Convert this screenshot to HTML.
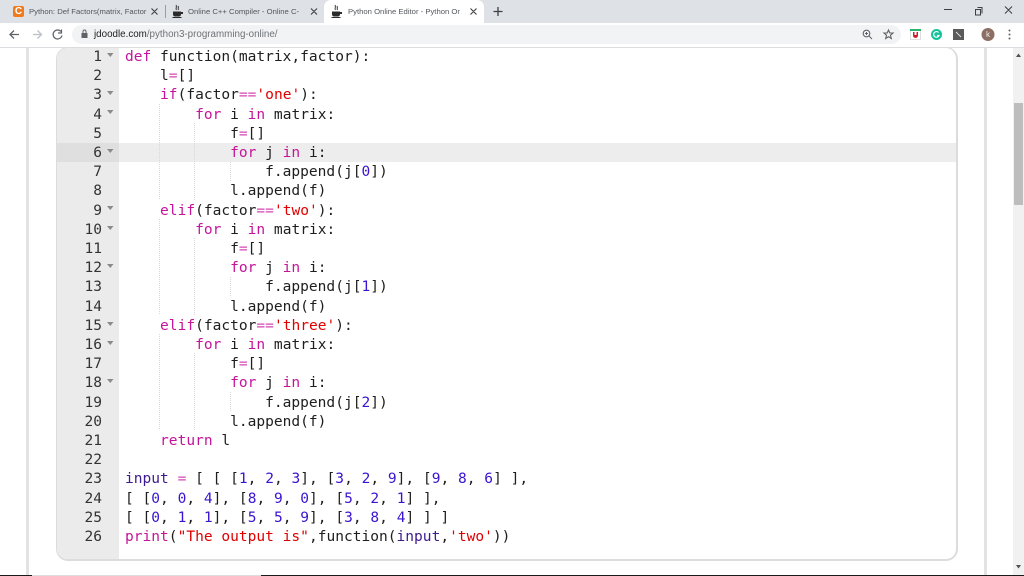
<!DOCTYPE html>
<html><head><meta charset="utf-8"><style>
html,body{margin:0;padding:0;width:1024px;height:576px;overflow:hidden;background:#fff;font-family:"Liberation Sans",sans-serif}
.a{position:absolute}
.tt{position:absolute;top:6px;font-size:7.7px;line-height:11px;white-space:nowrap;overflow:hidden;color:#55585c}
pre{position:absolute;margin:0;font-family:"DejaVu Sans Mono",monospace;font-size:14.55px;line-height:19.2px;color:#1e1e1e}
.k{color:#c5149a}.o{color:#d548b5}.s{color:#e00000}.n{color:#3b14d0}.v{color:#3d1a8e}.b{color:#7a4a10}
</style></head><body>
<!-- tab strip -->
<div class="a" style="left:0;top:0;width:1024px;height:23px;background:#dee1e6"></div>
<div class="a" style="left:324px;top:0;width:160px;height:23px;background:#fff;border-radius:7px 7px 0 0"></div>
<div class="a" style="left:13px;top:6px;width:11px;height:11px;background:#f07b1c;border-radius:2px;color:#fff;font:bold 10px/11px 'Liberation Sans';text-align:center">C</div>
<div class="tt" style="left:29px;width:118px">Python: Def Factors(matrix, Factor</div>
<div class="a" style="left:165px;top:5px;width:1px;height:13px;background:#9a9da1"></div>
<div class="tt" style="left:188px;width:116px">Online C++ Compiler - Online C-</div>
<div class="tt" style="left:348px;width:117px">Python Online Editor - Python Or</div>
<svg class="a" style="left:0;top:0" width="1024" height="48" fill="none">
<g stroke="#3c4043" stroke-width="1.1"><path d="M151.500 8.500l6 6M157.500 8.500l-6 6M311 8.500l6 6M317 8.500l-6 6M470.500 8.500l6 6M476.500 8.500l-6 6"/><path d="M498 7v9M493.500 11.500h9" stroke-width="1.300"/></g>
<g stroke="#333" stroke-width="1"><path d="M176 5c1.500 2-1 3 .5 5M178 6c1 1.500-.5 2.500.5 4"/><path d="M335 5c1.500 2-1 3 .5 5M337 6c1 1.500-.5 2.500.5 4"/></g>
<g fill="#2b2b2b"><path d="M173 11.500h8v3c0 1-1 2-2 2h-4c-1 0-2-1-2-2zM181 12h2v2h-2zM172.500 17h9v1h-9z"/><path d="M332 11.500h8v3c0 1-1 2-2 2h-4c-1 0-2-1-2-2zM340 12h2v2h-2zM331.500 17h9v1h-9z"/></g>
<g stroke="#3c4043" stroke-width="1"><path d="M944 9.500h8M977.500 7.500h4.500v6M975.500 9.500h5v5.500h-5zM1005 6.500l7 7M1012 6.500l-7 7" fill="none"/></g>
<!-- toolbar -->
<rect x="0" y="23" width="1024" height="24" fill="#fff"/>
<rect x="72" y="25" width="829" height="19" rx="9.500" fill="#f1f3f4"/>
<rect x="0" y="47" width="1024" height="1" fill="#dadce0"/>
<path d="M19 34.500h-8.500M14 30.500l-4 4 4 4" stroke="#5f6368" stroke-width="1.300"/>
<path d="M41 34.500h-8M37.500 30.500l4 4-4 4" stroke="#bcbfc3" stroke-width="1.300"/>
<path d="M61 31.500a4.500 4.500 0 1 0 1 4M61.500 29.500v3.500h-3.500" stroke="#5f6368" stroke-width="1.200"/>
<rect x="81.500" y="33" width="6" height="5" fill="#5f6368"/><path d="M83 33v-1.500a1.500 1.500 0 0 1 3 0V33" stroke="#5f6368"/>
<circle cx="866.500" cy="33.500" r="3.300" stroke="#5f6368" stroke-width="1.100"/><path d="M869 36l3 3M865 33.500h3M866.500 32v3" stroke="#5f6368"/>
<path d="M888.500 30l1.300 3h3.200l-2.500 2.200.8 3.300-2.800-1.800-2.800 1.800.8-3.300-2.500-2.200h3.200z" stroke="#5f6368" stroke-width="1.100"/>
<rect x="910.500" y="29.500" width="10" height="10" fill="#fff" stroke="#ddd"/><rect x="910" y="29" width="11" height="2" fill="#2cb56a"/><path d="M913 32h5v3.500a2.500 2.500 0 0 1-5 0z" fill="#d01c2c"/><rect x="914.500" y="32" width="2" height="3" fill="#fff"/>
<circle cx="936.500" cy="34.500" r="5.500" fill="#15c39a"/><path d="M938.500 32.500a2.800 2.800 0 1 0 .5 3h-2" stroke="#fff" stroke-width="1.200"/>
<rect x="953" y="29" width="11" height="11" fill="#5a5a5a"/><path d="M956 32l5 5" stroke="#ddd"/>
<circle cx="988" cy="34.500" r="6.500" fill="#8d6e63"/>
<circle cx="1009.500" cy="30.500" r="1" fill="#5f6368"/><circle cx="1009.500" cy="34.500" r="1" fill="#5f6368"/><circle cx="1009.500" cy="38.500" r="1" fill="#5f6368"/>
</svg>
<div class="a" style="left:984px;top:29px;width:8px;text-align:center;color:#eee;font-size:8px;line-height:11px">k</div>
<div class="a" style="left:94px;top:28px;font-size:9.8px;line-height:13px;color:#6f7377;white-space:nowrap"><span style="color:#202124">jdoodle.com</span>/python3-programming-online/</div>
<!-- page frame -->
<div class="a" style="left:26px;top:48px;width:3px;height:528px;background:#e3e3e3"></div>
<div class="a" style="left:984px;top:48px;width:3px;height:528px;background:#e3e3e3"></div>
<!-- scrollbar -->
<div class="a" style="left:1013px;top:48px;width:11px;height:528px;background:#f1f1f1"></div>
<div class="a" style="left:1014px;top:103px;width:9px;height:102px;background:#bdbdbd"></div>
<svg class="a" style="left:1013px;top:48px" width="11" height="528"><path d="M3 9h5L5.500 5.500zM3 517h5L5.500 520.500z" fill="#505050"/></svg>
<!-- editor -->
<div class="a" style="left:56px;top:47px;width:899px;height:511px;border:1px solid #dcdcdc;border-width:1px 2px 2px 1px;border-radius:12px;overflow:hidden;background:#fff">
 <div class="a" style="left:0;top:0;width:62px;height:511px;background:#ebebeb"></div>
 <div class="a" style="left:0;top:95px;width:899px;height:19px;background:#ededed"></div>
 <div class="a" style="left:0;top:95px;width:62px;height:19px;background:#dfdfdf"></div>
</div>
<!-- indent guides -->
<svg class="a" style="left:0;top:0" width="1024" height="576"><g stroke="#d8d8d8" stroke-dasharray="1 1">
<path d="M159.500 104v96M194.500 123v77M230.500 162v19M159.500 219v96M194.500 238v77M230.500 277v19M159.500 334v96M194.500 353v77M230.500 392v19"/>
</g>
<g fill="#8a8a8a"><path d="M107 53h6.500l-3.200 4zM107 91h6.500l-3.200 4zM107 110h6.500l-3.200 4zM107 149h6.500l-3.200 4zM107 206h6.500l-3.200 4zM107 226h6.500l-3.200 4zM107 264h6.500l-3.200 4zM107 322h6.500l-3.200 4zM107 341h6.500l-3.200 4zM107 379h6.500l-3.200 4z"/></g></svg>
<pre style="left:62px;top:47px;width:40px;text-align:right;color:#333">1
2
3
4
5
6
7
8
9
10
11
12
13
14
15
16
17
18
19
20
21
22
23
24
25
26</pre>
<pre style="left:125px;top:47px"><span class="k">def</span> function(matrix,factor):
    l<span class="o">=</span>[]
    <span class="k">if</span>(factor<span class="o">==</span><span class="s">'one'</span>):
        <span class="k">for</span> i <span class="k">in</span> matrix:
            f<span class="o">=</span>[]
            <span class="k">for</span> j <span class="k">in</span> i:
                f.append(j[<span class="n">0</span>])
            l.append(f)
    <span class="k">elif</span>(factor<span class="o">==</span><span class="s">'two'</span>):
        <span class="k">for</span> i <span class="k">in</span> matrix:
            f<span class="o">=</span>[]
            <span class="k">for</span> j <span class="k">in</span> i:
                f.append(j[<span class="n">1</span>])
            l.append(f)
    <span class="k">elif</span>(factor<span class="o">==</span><span class="s">'three'</span>):
        <span class="k">for</span> i <span class="k">in</span> matrix:
            f<span class="o">=</span>[]
            <span class="k">for</span> j <span class="k">in</span> i:
                f.append(j[<span class="n">2</span>])
            l.append(f)
    <span class="k">return</span> l

<span class="v">input</span> <span class="o">=</span> [ [ [<span class="n">1</span>, <span class="n">2</span>, <span class="n">3</span>], [<span class="n">3</span>, <span class="n">2</span>, <span class="n">9</span>], [<span class="n">9</span>, <span class="n">8</span>, <span class="n">6</span>] ],
[ [<span class="n">0</span>, <span class="n">0</span>, <span class="n">4</span>], [<span class="n">8</span>, <span class="n">9</span>, <span class="n">0</span>], [<span class="n">5</span>, <span class="n">2</span>, <span class="n">1</span>] ],
[ [<span class="n">0</span>, <span class="n">1</span>, <span class="n">1</span>], [<span class="n">5</span>, <span class="n">5</span>, <span class="n">9</span>], [<span class="n">3</span>, <span class="n">8</span>, <span class="n">4</span>] ] ]
<span class="k">print</span>(<span class="s">"The output is"</span>,function(<span class="v">input</span>,<span class="s">'two'</span>))</pre>
<!-- bottom edge -->
<div class="a" style="left:0;top:575px;width:1024px;height:1px;background:#1a1a1a"></div>
<div class="a" style="left:32px;top:575px;width:229px;height:1px;background:#ddd"></div>
</body></html>
